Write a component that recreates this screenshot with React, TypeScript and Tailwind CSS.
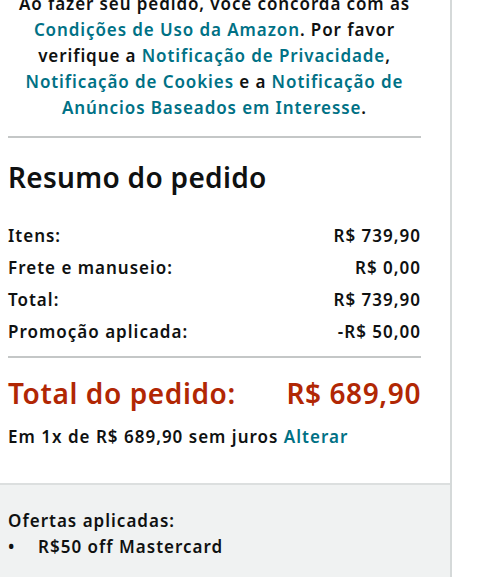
import React from 'react';

type Linha = {
    rotulo: string;
    valor: string;
};

const linhas: Linha[] = [
    { rotulo: 'Itens:', valor: 'R$ 739,90' },
    { rotulo: 'Frete e manuseio:', valor: 'R$ 0,00' },
    { rotulo: 'Total:', valor: 'R$ 739,90' },
    { rotulo: 'Promoção aplicada:', valor: '-R$ 50,00' },
];

const Link: React.FC<{ children: React.ReactNode }> = ({ children }) => (
    <a href="#" className="text-[#007185] no-underline">
        {children}
    </a>
);

const App: React.FC = () => {
    return (
        <div
            className="w-[500px] h-[577px] overflow-hidden bg-white text-[#0F1111] font-semibold"
            style={{ fontFamily: '"Noto Sans", "Open Sans", Arial, sans-serif' }}
        >
            <div className="w-[452px] h-full border-r-2 border-[#d5d9d9] flex flex-col">
                <div className="pl-2 pr-[29px]">
                    {/* aviso legal, quebras como na tela original */}
                    <p className="-mt-[9px] text-center text-[17px] leading-[26px] tracking-[0.9px]">
                        Ao fazer seu pedido, você concorda com as
                        <br />
                        <Link>Condições de Uso da Amazon</Link>. Por favor
                        <br />
                        verifique a <Link>Notificação de Privacidade</Link>,
                        <br />
                        <Link>Notificação de Cookies</Link> e a <Link>Notificação de</Link>
                        <br />
                        <Link>Anúncios Baseados em Interesse</Link>.
                    </p>

                    <hr className="mt-[15px] border-0 border-t-2 border-[#c4c7c7]" />

                    <h2 className="mt-[23px] text-[28px] leading-[32px] font-semibold tracking-[0.3px]">
                        Resumo do pedido
                    </h2>

                    <div className="mt-[31px] flex flex-col gap-[8px]">
                        {linhas.map((l) => (
                            <div
                                key={l.rotulo}
                                className="flex items-center justify-between h-[24px] text-[17px] leading-[24px] tracking-[1px]"
                            >
                                <span>{l.rotulo}</span>
                                <span>{l.valor}</span>
                            </div>
                        ))}
                    </div>

                    <hr className="mt-[12px] border-0 border-t-2 border-[#c4c7c7]" />

                    <div className="mt-[18px] flex items-center justify-between text-[28px] leading-[34px] tracking-[0.6px] text-[#B12704]">
                        <span>Total do pedido:</span>
                        <span>R$ 689,90</span>
                    </div>

                    <p className="mt-[16px] text-[17px] leading-[22px] tracking-[1px]">
                        Em 1x de R$ 689,90 sem juros <Link>Alterar</Link>
                    </p>
                </div>

                <div className="mt-[35px] flex-1 border-t-2 border-[#dcdfdf] bg-[#f0f2f2] px-2 pt-[23px] text-[17px] leading-[26px] tracking-[1px]">
                    <p>Ofertas aplicadas:</p>
                    <div className="flex">
                        <span className="w-[30px] shrink-0 pl-[0px]">•</span>
                        <span>R$50 off Mastercard</span>
                    </div>
                </div>
            </div>
        </div>
    );
};

export default App;
